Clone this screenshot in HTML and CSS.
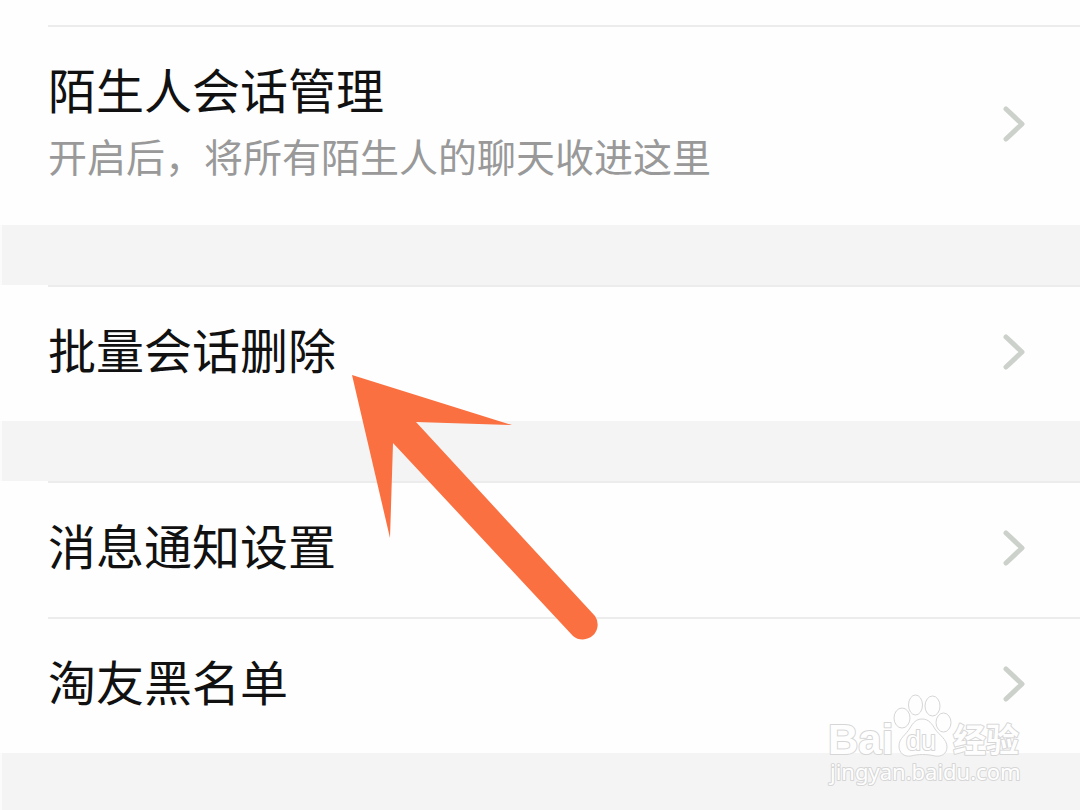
FILE: index.html
```html
<!DOCTYPE html>
<html lang="zh-CN">
<head>
  <meta charset="UTF-8">
  <meta name="viewport" content="width=device-width, initial-scale=1">
  <title>消息设置</title>
  <link rel="stylesheet" href="styles.css">
</head>
<body>
  <main class="settings">
    <nav class="group first">
      <a class="row tall" href="#stranger">
        <span class="label">
          <span class="title">陌生人会话管理</span>
          <span class="desc">开启后，将所有陌生人的聊天收进这里</span>
        </span>
        <svg class="chevron" viewBox="0 0 24 36"><path d="M4 3 L20 18 L4 33"/></svg>
      </a>
    </nav>

    <nav class="group">
      <a class="row" href="#batch">
        <span class="title">批量会话删除</span>
        <svg class="chevron" viewBox="0 0 24 36"><path d="M4 3 L20 18 L4 33"/></svg>
      </a>
      <svg class="arrow" viewBox="0 0 248 267">
        <path d="M0 0 L160 50 L64 47 L243 241 A15 15 0 0 1 221 261 L41 68 L38 163 Z"/>
      </svg>
    </nav>

    <nav class="group">
      <a class="row" href="#notice">
        <span class="title">消息通知设置</span>
        <svg class="chevron" viewBox="0 0 24 36"><path d="M4 3 L20 18 L4 33"/></svg>
      </a>
      <a class="row" href="#blacklist">
        <span class="title">淘友黑名单</span>
        <svg class="chevron" viewBox="0 0 24 36"><path d="M4 3 L20 18 L4 33"/></svg>
      </a>
    </nav>

    <footer class="footer">
      <svg class="watermark" viewBox="0 0 200 98">
        <text class="mark-bai" x="2" y="62">Bai</text>
        <ellipse cx="76" cy="26" rx="8" ry="10"/>
        <ellipse cx="89.5" cy="13" rx="7" ry="10"/>
        <ellipse cx="106.5" cy="14" rx="7.5" ry="10"/>
        <ellipse cx="117.5" cy="30.5" rx="7.5" ry="9.5"/>
        <path d="M96 27 C103 27 106 32 109 37 C113 43 121 47 121 55 C121 62 115 65 109 64 C101 62 92 62 85 64 C78 65 73 61 73 54 C73 46 80 43 84 36 C87 31 90 27 96 27 Z"/>
        <text class="mark-du" x="80" y="58">du</text>
        <text class="mark-cn" x="127" y="60">经验</text>
        <text class="mark-url" x="4" y="88">jingyan.baidu.com</text>
      </svg>
    </footer>
  </main>
</body>
</html>
```
FILE: styles.css
```css
* {
  box-sizing: border-box;
}
body {
  margin: 0;
  background: #fefefe;
  font-family: "Noto Sans CJK SC", sans-serif;
}
.settings {
  display: flex;
  flex-direction: column;
  gap: 60px;
  min-height: 100vh;
  background: linear-gradient(to right, #fbfbfb 2px, #f4f4f4 2px);
}
.group {
  position: relative;
  background: #fefefe;
}
.first {
  padding-top: 25px;
}
.row {
  display: flex;
  align-items: center;
  justify-content: space-between;
  height: 136px;
  margin-left: 48px;
  padding-right: 54px;
  padding-bottom: 4px;
  border-top: 2px solid #ececec;
  color: #111;
  text-decoration: none;
}
.tall {
  height: 200px;
}
.label {
  display: flex;
  flex-direction: column;
  padding-bottom: 10px;
}
.title {
  padding-bottom: 8px;
  font-size: 48px;
  line-height: 64px;
}
.desc {
  color: #999;
  font-size: 39px;
  line-height: 54px;
}
.chevron {
  width: 24px;
  height: 36px;
  fill: none;
  stroke: #ccd1cb;
  stroke-width: 5;
  stroke-linecap: round;
  stroke-linejoin: round;
}

/* pointer over the list */
.arrow {
  position: absolute;
  z-index: 2;
  top: 90px;
  left: 352px;
  width: 248px;
  height: 267px;
  fill: #fa7040;
}

.footer {
  position: relative;
  flex: 1;
  min-height: 57px;
  margin-top: -60px;
}
.watermark {
  position: absolute;
  top: -61px;
  right: 54px;
  width: 200px;
  height: 98px;
  fill: #fefefe;
  stroke: #d6d6d6;
  stroke-width: 1;
}
.watermark text {
  paint-order: stroke;
  stroke-width: 2;
  stroke-linejoin: round;
}
.mark-bai {
  font: bold 42px "Liberation Sans", sans-serif;
}
.mark-du {
  font: 27px "Liberation Sans", sans-serif;
}
.mark-cn {
  font: bold 33px "Noto Sans CJK SC", sans-serif;
}
.mark-url {
  font: 22px "Noto Sans", sans-serif;
}
```
